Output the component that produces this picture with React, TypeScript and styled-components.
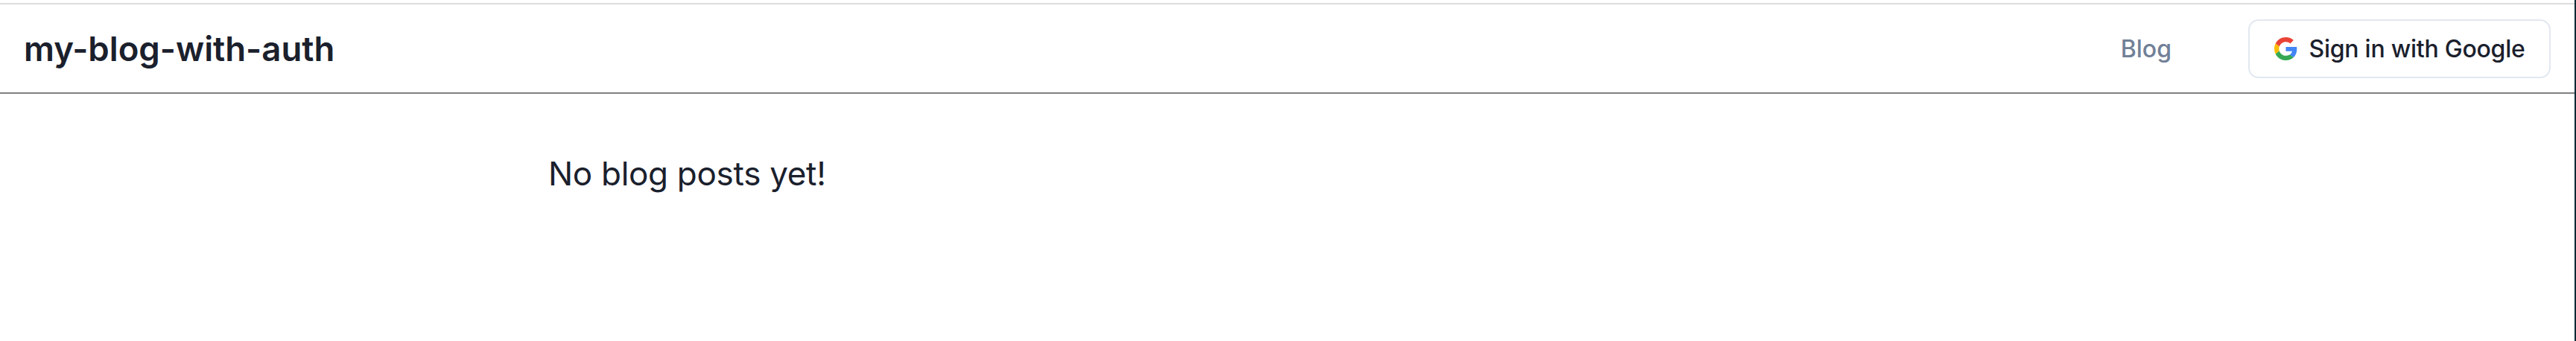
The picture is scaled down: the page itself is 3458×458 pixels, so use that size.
import React from "react";
import styled, { createGlobalStyle } from "styled-components";

const Global = createGlobalStyle`
  html, body { margin: 0; padding: 0; background: #fff; }
  body { font-family: Inter, "Liberation Sans", sans-serif; color: #1a202c; }
`;
const Page = styled.div`
  height: 458px;
  padding-top: 4px;
  box-sizing: border-box;
  border-right: 2px solid #062a33;
  overflow: hidden;
`;
const Header = styled.header`
  height: 122px;
  box-sizing: border-box;
  border-top: 2px solid #dcdcdc;
  border-bottom: 2px solid #808080;
  display: flex;
  align-items: center;
  justify-content: space-between;
  padding: 0 32px 0 32px;
`;
const Title = styled.div`
  font-size: 45.5px;
  font-weight: 600;
  color: #1a202c;
`;
const Nav = styled.nav`
  display: flex;
  align-items: center;
  gap: 103px;
`;
const NavLink = styled.a`
  font-size: 32px;
  font-weight: 500;
  color: #718096;
`;
const Button = styled.button`
  display: flex;
  align-items: center;
  gap: 16px;
  height: 79px;
  width: 406px;
  justify-content: center;
  box-sizing: border-box;
  background: #fff;
  border: 2px solid #e2e8f0;
  border-radius: 14px;
  font-family: inherit;
  font-size: 32px;
  font-weight: 500;
  letter-spacing: -0.25px;
  color: #1a202c;
`;
const Main = styled.main`
  padding: 81px 0 0 736px;
`;
const Empty = styled.p`
  margin: 0;
  font-size: 44px;
  font-weight: 400;
  letter-spacing: -0.3px;
  line-height: 1.2;
  color: #1a202c;
`;
const GoogleIcon = () => (
  <svg width="31" height="31" viewBox="0 0 48 48" aria-hidden="true">
    <path fill="#EA4335" d="M24 9.5c3.54 0 6.71 1.22 9.21 3.6l6.85-6.85C35.9 2.38 30.47 0 24 0 14.62 0 6.51 5.38 2.56 13.22l7.98 6.19C12.43 13.72 17.74 9.5 24 9.5z" />
    <path fill="#4285F4" d="M46.98 24.55c0-1.57-.15-3.09-.38-4.55H24v9.02h12.94c-.58 2.96-2.26 5.48-4.78 7.18l7.73 6c4.51-4.18 7.09-10.36 7.09-17.65z" />
    <path fill="#FBBC05" d="M10.53 28.59c-.48-1.45-.76-2.99-.76-4.59s.27-3.14.76-4.59l-7.98-6.19C.92 16.46 0 20.12 0 24c0 3.88.92 7.54 2.56 10.78l7.97-6.19z" />
    <path fill="#34A853" d="M24 48c6.48 0 11.93-2.13 15.89-5.81l-7.73-6c-2.15 1.45-4.92 2.3-8.16 2.3-6.26 0-11.57-4.22-13.47-9.91l-7.98 6.19C6.51 42.62 14.62 48 24 48z" />
  </svg>
);
export default function App() {
  return (
    <Page>
      <Global />
      <Header>
        <Title>my-blog-with-auth</Title>
        <Nav>
          <NavLink>Blog</NavLink>
          <Button><GoogleIcon />Sign in with Google</Button>
        </Nav>
      </Header>
      <Main>
        <Empty>No blog posts yet!</Empty>
      </Main>
    </Page>
  );
}
